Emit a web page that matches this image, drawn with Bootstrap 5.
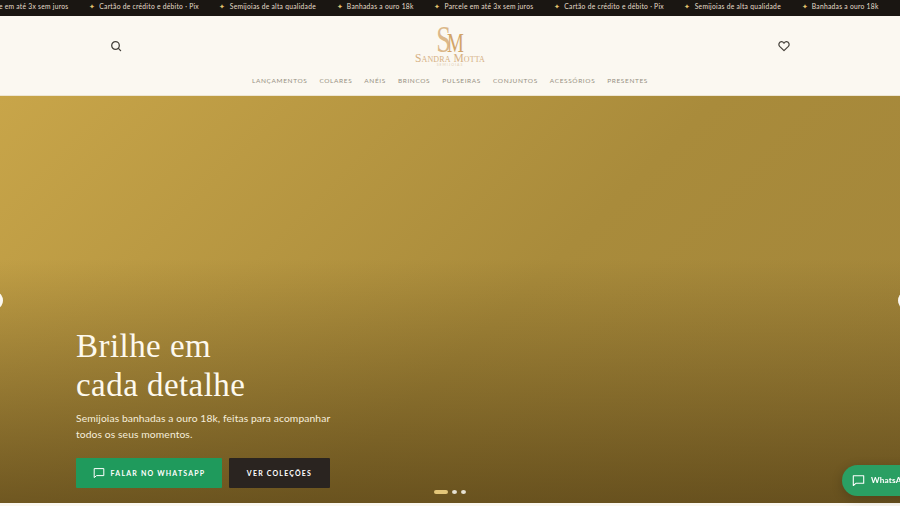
<!DOCTYPE html>
<html lang="pt-BR">
<head>
<meta charset="utf-8">
<title>Sandra Motta</title>
<link href="https://cdn.jsdelivr.net/npm/bootstrap@5.3.0/dist/css/bootstrap.min.css" rel="stylesheet">
<style>
html,body{height:506px;overflow:hidden;background:#fbf8f1;font-family:"Lato","Liberation Sans",sans-serif}
.ticker{height:16px;background:#1a1612;color:#e6decb;font-size:6.72px;letter-spacing:.26px;white-space:nowrap;overflow:hidden;padding-bottom:3px}
.ticker-track{margin-left:-20.5px;gap:20.6px}
.ticker-star{color:#e3c36e;font-size:6.5px;margin-right:4px}
.site-head{height:80px;background:#fbf8f1;border-bottom:1px solid #eee6d2}
.head-row{height:60px;padding:0 110px}
.head-icon{width:12px;height:12px;color:#45413a}
.brand-block{width:90px;color:#cf9f63;line-height:1}
.brand-mono{font-family:"Liberation Serif",serif;height:27px;line-height:27px;margin-top:2px;padding-right:6px;transform:scaleX(.7);white-space:nowrap;letter-spacing:-6px;color:#d2a468}
.mono-s{font-size:38px;color:#dcb88a}
.mono-m{font-size:27px}
.brand-name{font-family:"Liberation Serif",serif;font-size:11.5px;font-variant:small-caps;letter-spacing:.1px;white-space:nowrap;color:#d6b084;height:11px}
.brand-sub{font-size:3.5px;letter-spacing:1px;color:#dfceb2}
.cat-nav{gap:12px;font-size:6.5px;letter-spacing:.62px;color:#979082;line-height:1;text-transform:uppercase;margin-top:2px}
.hero{height:407px;background:linear-gradient(180deg,rgba(60,42,10,0) 40%,rgba(60,42,10,.58) 100%),linear-gradient(135deg,#c8a549 0%,#a98b3b 55%,#a2853a 100%);padding:231px 0 0 76px}
.hero-title{font-family:"Liberation Serif",serif;font-size:33px;line-height:39px;letter-spacing:.45px;color:#fdf9ee;margin:0 0 5px}
.hero-copy{font-size:10.3px;line-height:16px;color:#f6eedc;margin:0 0 16px;width:270px;letter-spacing:.1px}
.cta{height:30px;font-size:7px;font-weight:700;letter-spacing:1.2px;color:#fff;border:0;border-radius:1px;text-transform:uppercase;padding:0;gap:6px}
.cta:hover{color:#fff}
.cta-green{width:146px;background:#1f9a5c}
.cta-green:hover{background:#1f9a5c}
.cta-dark{width:101px;background:#2a2420}
.cta-dark:hover{background:#2a2420}
.cta-gap{gap:7px}
.edge-btn{position:absolute;top:197px;width:11px;height:15px;background:#fbf8f1;border-radius:50%}
.edge-left{left:-8px}
.edge-right{right:-9px}
.hero-dots{position:absolute;left:434px;top:394px;gap:4px}
.dot-on{width:14px;height:4px;border-radius:2px;background:#e3c679}
.dot-off{width:5px;height:4px;border-radius:50%;background:#e6e1d2}
.wa-float{position:fixed;left:842px;top:465px;height:31px;width:90px;background:#2a9f63;border-radius:16px;color:#fff;font-size:8.2px;font-weight:700;letter-spacing:.2px;padding-left:10px;gap:6px;box-shadow:0 3px 12px rgba(0,0,0,.2)}
</style>
</head>
<body>
<div class="ticker d-flex align-items-center">
  <div class="ticker-track d-flex">
    <span>Parcele em até 3x sem juros</span>
    <span><span class="ticker-star">✦</span>Cartão de crédito e débito · Pix</span>
    <span><span class="ticker-star">✦</span>Semijoias de alta qualidade</span>
    <span><span class="ticker-star">✦</span>Banhadas a ouro 18k</span>
    <span><span class="ticker-star">✦</span>Parcele em até 3x sem juros</span>
    <span><span class="ticker-star">✦</span>Cartão de crédito e débito · Pix</span>
    <span><span class="ticker-star">✦</span>Semijoias de alta qualidade</span>
    <span><span class="ticker-star">✦</span>Banhadas a ouro 18k</span>
  </div>
</div>
<header class="site-head">
  <div class="head-row d-flex justify-content-between align-items-center">
    <svg class="head-icon" viewBox="0 0 12 12" fill="none" stroke="currentColor" stroke-width="1.3" stroke-linecap="round"><circle cx="5.5" cy="5.5" r="3.8"/><path d="M8.4 8.4 10.6 10.6"/></svg>
    <div class="brand-block text-center">
      <div class="brand-mono"><span class="mono-s">S</span><span class="mono-m">M</span></div>
      <div class="brand-name">Sandra Motta</div>
      <div class="brand-sub">SEMIJOIAS</div>
    </div>
    <svg class="head-icon" viewBox="0 0 12 12" fill="none" stroke="currentColor" stroke-width="1.2" stroke-linejoin="round"><path d="M6 10.6 1.6 6.4C.2 4.8 1 1.9 3.2 1.7 4.4 1.6 5.4 2.3 6 3.3 6.6 2.3 7.6 1.6 8.8 1.7 11 1.9 11.8 4.8 10.4 6.4Z"/></svg>
  </div>
  <nav class="cat-nav d-flex justify-content-center">
    <span>Lançamentos</span><span>Colares</span><span>Anéis</span><span>Brincos</span><span>Pulseiras</span><span>Conjuntos</span><span>Acessórios</span><span>Presentes</span>
  </nav>
</header>
<section class="hero position-relative">
  <h1 class="hero-title">Brilhe em<br>cada detalhe</h1>
  <p class="hero-copy">Semijoias banhadas a ouro 18k, feitas para acompanhar todos os seus momentos.</p>
  <div class="d-flex cta-gap">
    <a class="btn cta cta-green d-flex align-items-center justify-content-center" href="#">
      <svg width="12" height="12" viewBox="0 0 12 12" fill="none" stroke="currentColor" stroke-width="1" stroke-linejoin="round"><path d="M1.2 1.6h9.6v7H3.6L1.2 10.6Z"/></svg>Falar no WhatsApp</a>
    <a class="btn cta cta-dark d-flex align-items-center justify-content-center" href="#">Ver coleções</a>
  </div>
  <span class="edge-btn edge-left"></span>
  <span class="edge-btn edge-right"></span>
  <div class="hero-dots d-flex"><span class="dot-on"></span><span class="dot-off"></span><span class="dot-off"></span></div>
</section>
<a class="wa-float d-flex align-items-center text-decoration-none" href="#">
  <svg width="13" height="13" viewBox="0 0 12 12" fill="none" stroke="currentColor" stroke-width="1" stroke-linejoin="round"><path d="M1.2 1.6h9.6v7H3.6L1.2 10.6Z"/></svg>WhatsApp</a>
<script src="https://cdn.jsdelivr.net/npm/bootstrap@5.3.0/dist/js/bootstrap.bundle.min.js"></script>
</body>
</html>
